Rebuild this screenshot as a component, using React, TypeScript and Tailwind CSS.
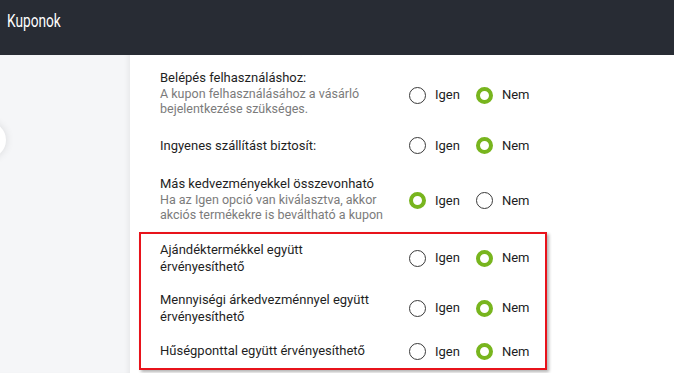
import React from 'react';

type Row = {
  title: string;
  desc?: string;
  value: boolean;
};

const topRows: Row[] = [
  { title: 'Belépés felhasználáshoz:', desc: 'A kupon felhasználásához a vásárló\nbejelentkezése szükséges.', value: false },
  { title: 'Ingyenes szállítást biztosít:', value: false },
  { title: 'Más kedvezményekkel összevonható', desc: 'Ha az Igen opció van kiválasztva, akkor\nakciós termékekre is beváltható a kupon', value: true },
];

const boxedRows: Row[] = [
  { title: 'Ajándéktermékkel együtt\nérvényesíthető', value: false },
  { title: 'Mennyiségi árkedvezménnyel együtt\nérvényesíthető', value: false },
  { title: 'Hűségponttal együtt érvényesíthető', value: false },
];

const Radio: React.FC<{ checked: boolean; label: string }> = ({ checked, label }) => (
  <label className="flex items-center">
    <span
      className={
        checked
          ? 'w-[17px] h-[17px] rounded-full border-[4px] border-[#78b51e] bg-white'
          : 'w-[17px] h-[17px] rounded-full border-[1.5px] border-[#3a3a3a] bg-white'
      }
    />
    <span className="ml-[9px] text-[13px] text-[#1d1d1d]">{label}</span>
  </label>
);

const OptionRow: React.FC<{ row: Row }> = ({ row }) => (
  <div className="flex items-center">
    <div className="w-[240px] shrink-0 whitespace-pre-line">
      <div className="text-[13px] leading-[17px] text-[#1f1f1f]">{row.title}</div>
      {row.desc && <div className="text-[12.5px] leading-[15px] text-[#7b7b7b]">{row.desc}</div>}
    </div>
    <div className={`ml-[9px] flex items-center gap-[16px] ${row.desc ? 'mt-[5px]' : 'mt-[1px]'}`}>
      <Radio checked={row.value} label="Igen" />
      <Radio checked={!row.value} label="Nem" />
    </div>
  </div>
);

export default function App() {
  return (
    <div className="w-[674px] h-[373px] overflow-hidden bg-white font-['Roboto',sans-serif] relative">
      <header className="h-[55px] bg-[#282c34] flex items-start px-[7px] pt-[7px]">
        <h1 className="text-[18px] text-white origin-left scale-x-[0.76]">Kuponok</h1>
      </header>
      <div className="flex h-[318px]">
        <aside className="w-[130px] shrink-0 bg-[#f5f6f8] shadow-[inset_-5px_0_5px_-3px_rgba(0,0,0,0.06)]" />
        <main className="flex-1 pt-[14px]">
          <div className="pl-[30px] flex flex-col gap-[19px]">
            {topRows.map((r) => (
              <OptionRow key={r.title} row={r} />
            ))}
          </div>
          <div className="ml-[9px] mt-[10px] w-[408px] border-2 border-[#e8131b] pl-[19px] pt-[7px] pb-[7px] flex flex-col gap-[16px] shadow-[2px_2px_3px_rgba(0,0,0,0.3)]">
            {boxedRows.map((r) => (
              <OptionRow key={r.title} row={r} />
            ))}
          </div>
        </main>
      </div>
      <div className="absolute left-[-30px] top-[122px] w-[36px] h-[36px] rounded-full bg-white shadow-[0_0_8px_rgba(0,0,0,0.12)]" />
    </div>
  );
}
